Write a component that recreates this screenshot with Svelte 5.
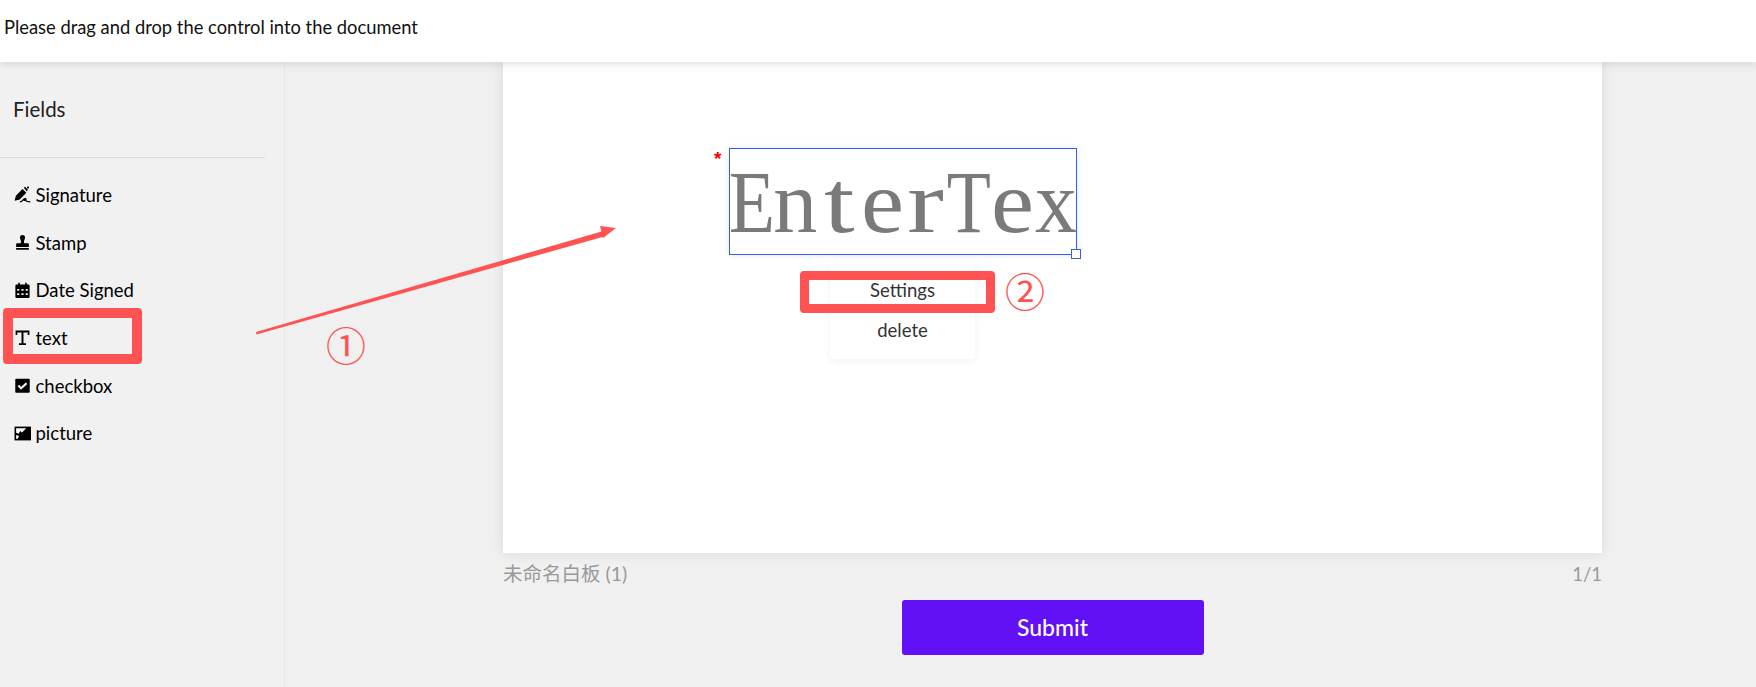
<script>
  const fields = [
    { name: "Signature", icon: "sign" },
    { name: "Stamp", icon: "stamp" },
    { name: "Date Signed", icon: "date" },
    { name: "text", icon: "text" },
    { name: "checkbox", icon: "check" },
    { name: "picture", icon: "pic" }
  ];
  // the reference font is half-width, so each glyph sits in its own cell
  const letters = [
    ["E", 0.86], ["n", 1], ["t", 1.25], ["e", 1.1], ["r", 1.25], ["T", 0.82], ["e", 1.1], ["x", 0.95]
  ];
</script>

<div class="app">
  <header class="top">Please drag and drop the control into the document</header>

  <div class="main">
    <aside class="side">
      <h3>Fields</h3>
      <ul>
        {#each fields as f}
          <li>
            <svg viewBox="0 0 16 16" width="17" height="17" fill="#000">
              {#if f.icon === "sign"}
                <path d="M.6 13.800 1.800 9.200 8 2.800 11.600 6.400 5.400 12.600Z" />
                <path d="M9.200 1.600 10.400.6 13 3.200 12.200 5.200Z" />
                <circle cx="13.200" cy="1.400" r="1" />
                <path d="M5.500 15c1.500 0 2.500-1 3.500-2.400.8-1 2.400-1 2.400 0 0 1.200-2 1.400-2 .4 0-.6 1.500 2 6 2" fill="none" stroke="#000" stroke-width="1.100" />
              {:else if f.icon === "stamp"}
                <path d="M8 1a2.400 2.400 0 0 1 2.400 2.400c0 1.500-1 2.200-1 3.800 0 .6.100 1.100.3 1.400h3.300c.6 0 1 .4 1 1v2.600H2V9.600c0-.6.400-1 1-1h3.300c.2-.3.300-.8.300-1.400 0-1.600-1-2.300-1-3.800A2.400 2.400 0 0 1 8 1Z" />
                <rect x="2" y="13.200" width="12" height="1.600" />
              {:else if f.icon === "date"}
                <path fill-rule="evenodd" d="M4 .8h1.500v1.500h5V.8H12v1.500h1.500c.7 0 1.200.5 1.200 1.200v10.300c0 .7-.5 1.200-1.200 1.200h-11c-.7 0-1.200-.5-1.200-1.200V3.500c0-.7.500-1.200 1.200-1.200H4ZM3 6.500v1.800h2V6.500Zm4 0v1.800h2V6.500Zm4 0v1.800h2V6.500Zm-8 4v1.800h2v-1.800Zm4 0v1.800h2v-1.800Zm4 0v1.800h2v-1.800Z" />
              {:else if f.icon === "text"}
                <path d="M1.500 1.500h13v4.200h-1.600V3.200H8.900v10.200h2.400v1.600H4.700v-1.600h2.400V3.200H3.100v2.500H1.500Z" />
              {:else if f.icon === "check"}
                <path fill-rule="evenodd" d="M2 1.600h12c.5 0 .8.3.8.8V14c0 .5-.3.8-.8.8H2c-.5 0-.8-.3-.8-.8V2.400c0-.5.3-.8.8-.8Zm4.600 10.400 6-5.400-1.400-1.400-4.500 4-1.900-1.800-1.400 1.300Z" />
              {:else}
                <rect x=".5" y="1.500" width="15.500" height="13" />
                <path d="M2 3h9.500L7.500 7 6 5.700 4.200 8.200 2 7.400Z" fill="#fff" />
                <path d="M2 13V9.500l2.800.8L3.500 13Z" fill="#fff" />
              {/if}
            </svg>
            <span>{f.name}</span>
          </li>
        {/each}
      </ul>
    </aside>

    <section class="stage">
      <div class="page">
        <span class="req">*</span>
        <div class="field">
          {#each letters as [ch, sx]}
            <span class="cell"><span class="glyph" style="transform: scaleX({sx})">{ch}</span></span>
          {/each}
          <i class="handle"></i>
        </div>
        <div class="menu">
          <div>Settings</div>
          <div>delete</div>
        </div>
      </div>
      <div class="meta">
        <span>未命名白板 (1)</span>
        <span class="pages">1/1</span>
      </div>
      <button type="button" class="submit">Submit</button>
    </section>
  </div>

  <!-- hand-drawn annotations laid over the screenshot -->
  <svg class="arrow" width="1756" height="687" viewBox="0 0 1756 687">
    <path d="M256 332 256.500 334.500 606 236 605 230.500Z" fill="#ff5252" />
    <path d="M616 228 600 226 603 238Z" fill="#ff5252" />
  </svg>
  <div class="mark mark1"></div>
  <div class="mark mark2"></div>
  <span class="num num1">①</span>
  <span class="num num2">②</span>
</div>

<style>
  :global(body) {
    margin: 0;
    background: #f0f0f0;
  }

  .app {
    position: relative;
    height: 687px;
    width: 1756px;
    overflow: hidden;
    display: flex;
    flex-direction: column;
    background: #f0f0f0;
    font-family: "Lato", "Noto Sans CJK SC", sans-serif;
    color: #111;
  }

  .top {
    height: 62px;
    flex: none;
    box-sizing: border-box;
    padding: 0 4px 8px;
    display: flex;
    align-items: center;
    font-size: 18.350px;
    background: #fff;
    box-shadow: 0 2px 8px rgba(0, 0, 0, 0.12);
    position: relative;
    z-index: 2;
  }

  .main {
    flex: 1;
    display: flex;
    min-height: 0;
  }

  .side {
    width: 285px;
    flex: none;
    box-sizing: border-box;
    border-right: 1px solid #e8e8e8;
    background: #f1f1f1;
  }

  h3 {
    margin: 0;
    width: 265px;
    height: 96px;
    box-sizing: border-box;
    padding: 33px 0 0 13px;
    font-size: 20.500px;
    line-height: 28px;
    font-weight: 400;
    color: #222;
    border-bottom: 1px solid #dcdcdc;
  }

  ul {
    list-style: none;
    margin: 0;
    padding: 13px 0 0 14px;
  }

  li {
    height: 47.700px;
    display: flex;
    align-items: center;
    gap: 4.500px;
    font-size: 18.500px;
    color: #000;
  }

  .stage {
    flex: 1;
    padding-left: 218px;
    display: flex;
    flex-direction: column;
    align-items: flex-start;
  }

  .page {
    position: relative;
    width: 1099px;
    height: 491px;
    flex: none;
    background: #fff;
    box-shadow: 0 0 12px rgba(0, 0, 0, 0.1);
  }

  .req {
    position: absolute;
    left: 211px;
    top: 87px;
    color: #f00;
    font-family: "Liberation Sans", sans-serif;
    font-size: 19px;
    line-height: 20px;
    font-weight: 700;
  }

  .field {
    position: absolute;
    left: 226px;
    top: 86px;
    width: 348px;
    height: 107px;
    box-sizing: border-box;
    border: 1px solid #3b5bea;
    box-shadow: 0 0 6px rgba(59, 91, 234, 0.15);
    display: flex;
    font-family: "Liberation Serif", serif;
    font-size: 88px;
    line-height: 107px;
    color: #7a7a7a;
  }

  .cell {
    width: 43.500px;
    flex: none;
    display: flex;
    justify-content: center;
    overflow: visible;
  }

  .glyph {
    display: block;
  }

  .handle {
    position: absolute;
    right: -5px;
    bottom: -5px;
    width: 8px;
    height: 8px;
    border: 1px solid #3b5bea;
    background: #fff;
  }

  .menu {
    position: absolute;
    left: 327px;
    top: 201px;
    width: 145px;
    height: 96px;
    box-sizing: border-box;
    padding-top: 8px;
    background: #fff;
    border-radius: 4px;
    box-shadow: 0 2px 8px rgba(0, 0, 0, 0.06);
    font-size: 18.500px;
    color: #333;
    text-align: center;
  }

  .menu div {
    height: 39.500px;
    line-height: 39.500px;
  }

  .meta {
    width: 1099px;
    display: flex;
    justify-content: space-between;
    margin-top: 9px;
    font-size: 19.500px;
    line-height: 24px;
    color: #999;
  }

  .pages {
    font-size: 18.500px;
  }

  .submit {
    width: 302px;
    height: 55px;
    margin: 14px 0 0 398.500px;
    border: 0;
    border-radius: 3px;
    background: #6210f5;
    color: #fff;
    font-family: inherit;
    font-size: 23px;
    font-weight: 500;
    padding-bottom: 3px;
  }

  .arrow {
    position: absolute;
    left: 0;
    top: 0;
    z-index: 3;
    pointer-events: none;
  }

  .mark {
    position: absolute;
    z-index: 3;
    box-sizing: border-box;
    border: 10px solid #ff5252;
    border-radius: 4px;
  }

  .mark1 {
    left: 3px;
    top: 308px;
    width: 139px;
    height: 56px;
  }

  .mark2 {
    left: 800px;
    top: 271px;
    width: 195px;
    height: 42px;
    border-width: 9px;
  }

  .num {
    position: absolute;
    z-index: 3;
    width: 44px;
    text-align: center;
    font-family: "Noto Sans CJK SC", sans-serif;
    font-size: 40px;
    line-height: 44px;
    color: #ff5252;
  }

  .num1 {
    left: 324px;
    top: 322px;
  }

  .num2 {
    left: 1003px;
    top: 268px;
  }
</style>
